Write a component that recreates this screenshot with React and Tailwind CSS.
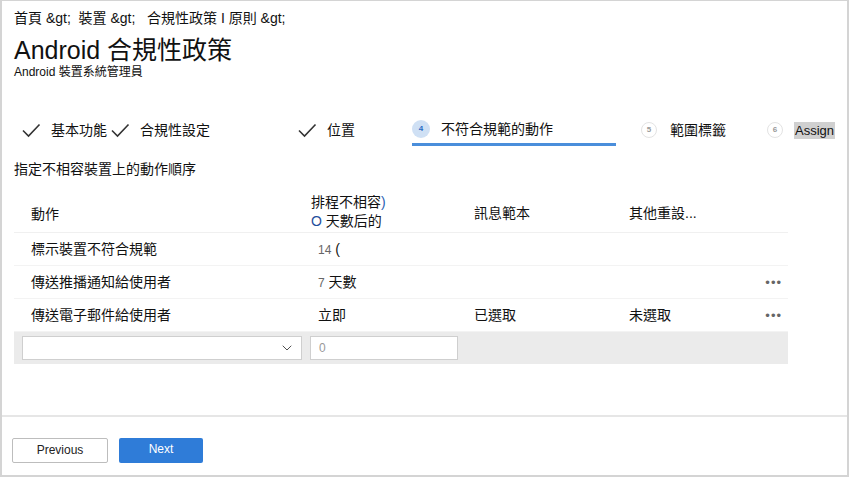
import { ChevronDown } from 'lucide-react';

const Check = () => (
  <svg width="20" height="16" viewBox="0 0 20 16" className="shrink-0">
    <path d="M2 8.5 L7.5 14 L18.5 2.5" fill="none" stroke="#333" strokeWidth="1.6" />
  </svg>
);

const StepNum = ({ n, active }) => (
  <span
    className={
      active
        ? 'w-[18px] h-[18px] rounded-full bg-[#cfe0f4] text-[#2b6cc4] text-[8px] font-bold flex items-center justify-center shrink-0'
        : 'w-[16px] h-[16px] rounded-full border border-[#e3e3e3] text-[#999] text-[8px] font-bold flex items-center justify-center shrink-0'
    }
  >
    {n}
  </span>
);

const Dots = () => <span className="text-[#666] text-[13px] tracking-[1px] leading-none">•••</span>;

const rows = [
  { action: '標示裝置不符合規範', days: '14', unit: ' (', tmpl: '', other: '', dots: false },
  { action: '傳送推播通知給使用者', days: '7', unit: ' 天數', tmpl: '', other: '', dots: true },
  { action: '傳送電子郵件給使用者', days: '', unit: '立即', tmpl: '已選取', other: '未選取', dots: true },
];

export default function App() {
  return (
    <div
      className="w-[849px] h-[477px] bg-white border-2 border-t border-[#d4d4d4] flex flex-col text-[#111] overflow-hidden"
      style={{ fontFamily: '"Liberation Sans", "Noto Sans CJK TC", sans-serif' }}
    >
      <div className="flex-1 pl-[12px] whitespace-nowrap">
        <div className="text-[14px] mt-[8px] leading-[18px] whitespace-pre">首頁 &amp;gt;  裝置 &amp;gt;   合規性政策 I 原則 &amp;gt;</div>
        <h1 className="text-[25px] leading-[30px] mt-[8px]">Android 合規性政策</h1>
        <div className="text-[12px] leading-[14px]">Android 裝置系統管理員</div>

        <div className="flex items-center mt-[35px] h-[32px] text-[14px]">
          <div className="flex items-center ml-[7px]">
            <Check />
            <span className="ml-[10px]">基本功能</span>
          </div>
          <div className="flex items-center ml-[3px]">
            <Check />
            <span className="ml-[10px]">合規性設定</span>
          </div>
          <div className="flex items-center ml-[87px]">
            <Check />
            <span className="ml-[10px]">位置</span>
          </div>
          <div className="flex items-center ml-[57px] w-[204px] h-full border-b-[3px] border-[#4a8edb] pt-[1px]">
            <StepNum n="4" active />
            <span className="ml-[11px]">不符合規範的動作</span>
          </div>
          <div className="flex items-center ml-[25px]">
            <StepNum n="5" />
            <span className="ml-[13px]">範圍標籤</span>
          </div>
          <div className="flex items-center ml-[41px]">
            <StepNum n="6" />
            <span className="ml-[11px] bg-[#d0d0d0] px-[1px] leading-[17px] text-[13px]">Assign</span>
          </div>
        </div>

        <div className="text-[14px] mt-[14px] leading-[18px]">指定不相容裝置上的動作順序</div>

        <div className="mt-[16px] w-[774px] text-[14px]">
          <div className="grid grid-cols-[297px_163px_155px_1fr_40px] h-[39px] border-b border-[#f0f0f0] items-center">
            <div className="pl-[17px] pt-[2px]">動作</div>
            <div className="leading-[19px] -mt-[2px]">
              <div>排程不相容<span className="text-[#2b5fb3]">)</span></div>
              <div><span className="text-[#1f4e9c]">O</span> 天數后的</div>
            </div>
            <div>訊息範本</div>
            <div>其他重設...</div>
            <div />
          </div>
          {rows.map((r) => (
            <div
              key={r.action}
              className="grid grid-cols-[297px_163px_155px_1fr_40px] h-[33px] border-b border-[#f3f3f3] items-center"
            >
              <div className="pl-[17px]">{r.action}</div>
              <div className="pl-[7px]">
                {r.days && <span className="text-[#666] text-[12px]">{r.days}</span>}
                <span>{r.unit}</span>
              </div>
              <div>{r.tmpl}</div>
              <div>{r.other}</div>
              <div className="flex justify-end pr-[6px]">{r.dots && <Dots />}</div>
            </div>
          ))}
          <div className="flex items-center h-[32px] bg-[#ebebeb] pl-[8px] gap-[8px]">
            <div className="w-[280px] h-[24px] bg-white border border-[#cfcfcf] flex items-center justify-end pr-[6px]">
              <ChevronDown size={16} strokeWidth={1.4} color="#444" />
            </div>
            <div className="w-[148px] h-[24px] bg-white border border-[#cfcfcf] flex items-center pl-[8px] text-[12px] text-[#999]">
              0
            </div>
          </div>
        </div>
      </div>

      <div className="h-[60px] border-t-2 border-[#e6e6e6] flex items-center pl-[10px] gap-[11px] pt-[8px]">
        <button className="w-[96px] h-[25px] border border-[#bdbdbd] rounded-[2px] bg-white text-[12px] text-[#222]">
          Previous
        </button>
        <button className="w-[84px] h-[25px] rounded-[2px] bg-[#2f7cd8] text-[12px] text-white pb-[2px]">
          Next
        </button>
      </div>
    </div>
  );
}
